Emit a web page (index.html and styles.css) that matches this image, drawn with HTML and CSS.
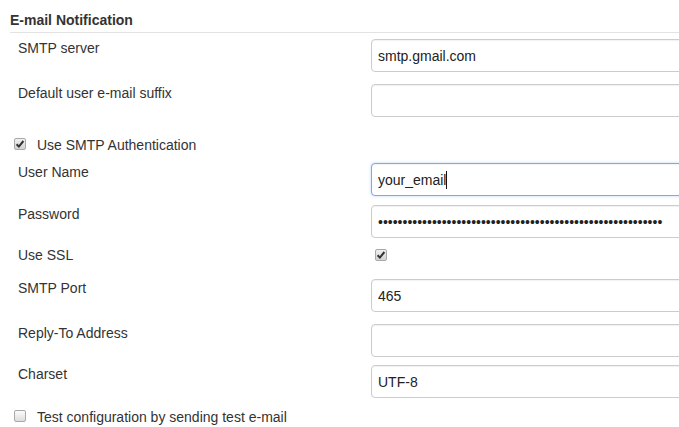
FILE: index.html
```html
<!DOCTYPE html>
<html>
<head>
<meta charset="utf-8">
<link rel="stylesheet" href="styles.css">
</head>
<body>
<div class="section">
  <div class="title">E-mail Notification</div>

  <div class="row r-server">
    <div class="label">SMTP server</div>
    <input class="field" type="text" value="smtp.gmail.com">
  </div>
  <div class="row r-suffix">
    <div class="label">Default user e-mail suffix</div>
    <input class="field" type="text" value="">
  </div>

  <div class="check-row r-auth">
    <span class="cb checked"><svg width="12" height="12" viewBox="0 0 12 12"><path d="M2.6 6.2 L4.9 8.6 L9.4 3" fill="none" stroke="#333" stroke-width="2"/></svg></span>
    <span class="check-text">Use SMTP Authentication</span>
  </div>

  <div class="row r-user">
    <div class="label">User Name</div>
    <div class="field-wrap">
      <input class="field focused" type="text" value="your_email">
      <span class="caret"></span>
    </div>
  </div>
  <div class="row r-pass">
    <div class="label">Password</div>
    <input class="field" type="password" value="xxxxxxxxxxxxxxxxxxxxxxxxxxxxxxxxxxxxxxxxxxxxxxxxxxxxxxxxxx">
  </div>
  <div class="row r-ssl">
    <div class="label">Use SSL</div>
    <div class="ssl-cell">
      <span class="cb checked"><svg width="12" height="12" viewBox="0 0 12 12"><path d="M2.6 6.2 L4.9 8.6 L9.4 3" fill="none" stroke="#333" stroke-width="2"/></svg></span>
    </div>
  </div>
  <div class="row r-port">
    <div class="label">SMTP Port</div>
    <input class="field" type="text" value="465">
  </div>
  <div class="row r-reply">
    <div class="label">Reply-To Address</div>
    <input class="field" type="text" value="">
  </div>
  <div class="row r-charset">
    <div class="label">Charset</div>
    <input class="field" type="text" value="UTF-8">
  </div>

  <div class="check-row r-test">
    <span class="cb"></span>
    <span class="check-text">Test configuration by sending test e-mail</span>
  </div>
</div>
</body>
</html>
```
FILE: styles.css
```css
html, body {
  margin: 0;
  padding: 0;
  background: #fff;
  overflow: hidden;
}
body {
  font-family: "Liberation Sans", Arial, sans-serif;
  font-size: 14px;
  color: #333;
  width: 679px;
  height: 427px;
}
.section {
  padding: 11px 0 0 10px;
}
.title {
  font-weight: bold;
  line-height: 18px;
  padding-bottom: 3px;
  border-bottom: 1px solid #e3e3e3;
}
.row {
  display: grid;
  grid-template-columns: 353px 1fr;
  padding-left: 8px;
  align-items: start;
}
.label {
  line-height: 18px;
}
.field-wrap {
  position: relative;
}
.field {
  display: block;
  box-sizing: border-box;
  width: 340px;
  height: 33px;
  margin: 0;
  padding: 0 6px;
  border: 1px solid #ccc;
  border-radius: 4px;
  box-shadow: inset 0 1px 1px rgba(0,0,0,0.06);
  font-family: "Liberation Sans", Arial, sans-serif;
  font-size: 14px;
  color: #222;
  background: #fff;
  outline: none;
}
.field.focused {
  border-color: #7faae6;
  box-shadow: inset 0 1px 1px rgba(0,0,0,0.05), 0 0 3px rgba(102,160,233,0.45);
}
.caret {
  position: absolute;
  left: 75px;
  top: 8px;
  width: 1px;
  height: 18px;
  background: #111;
}
.check-row {
  display: flex;
  align-items: flex-start;
  padding-left: 4px;
  line-height: 18px;
}
.cb {
  box-sizing: border-box;
  width: 12px;
  height: 12px;
  margin-top: 2px;
  border: 1px solid #a9a9a9;
  border-radius: 2px;
  background: linear-gradient(#fcfcfc, #dcdcdc);
  display: flex;
  align-items: center;
  justify-content: center;
  flex: none;
}
.cb svg {
  display: block;
  margin: -1px;
}
.cb.checked {
  background: linear-gradient(#f0f0f0, #d2d2d2);
}
.check-text {
  margin-left: 11px;
}
.ssl-cell {
  box-sizing: border-box;
  display: flex;
  padding: 3px 0 0 4px;
  height: 18px;
}
.ssl-cell .cb {
  margin-top: 0;
}
.r-server { margin-top: 6px; }
.r-suffix { margin-top: 12px; }
.r-auth { margin-top: 19px; }
.r-user { margin-top: 9px; }
.r-pass { margin-top: 9px; }
.r-ssl { margin-top: 8px; }
.r-port { margin-top: 15px; }
.r-reply { margin-top: 12px; }
.r-charset { margin-top: 8px; }
.r-test { margin-top: 10px; }
```
